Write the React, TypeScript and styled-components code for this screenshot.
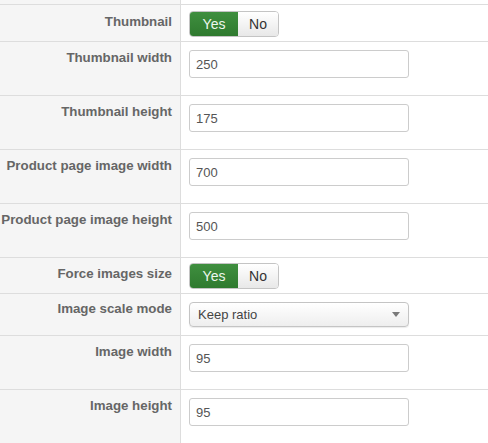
import React from 'react';
import styled, { createGlobalStyle } from 'styled-components';

const GlobalStyle = createGlobalStyle`
    body {
        margin: 0;
        background: #ffffff;
        font-family: "Liberation Sans", Arial, sans-serif;
    }
`

type Field =
    | { kind: 'toggle'; label: string; value: boolean; height: number; pad: number; labelPad: number }
    | { kind: 'text'; label: string; value: string; height: number; pad: number; labelPad: number }
    | { kind: 'select'; label: string; value: string; height: number; pad: number; labelPad: number }

const FIELDS: Field[] = [
    { kind: 'toggle', label: 'Thumbnail', value: true, height: 36, pad: 6, labelPad: 8 },
    { kind: 'text', label: 'Thumbnail width', value: '250', height: 53, pad: 8, labelPad: 7 },
    { kind: 'text', label: 'Thumbnail height', value: '175', height: 53, pad: 8, labelPad: 7 },
    { kind: 'text', label: 'Product page image width', value: '700', height: 53, pad: 8, labelPad: 7 },
    { kind: 'text', label: 'Product page image height', value: '500', height: 53, pad: 8, labelPad: 7 },
    { kind: 'toggle', label: 'Force images size', value: true, height: 35, pad: 5, labelPad: 7 },
    { kind: 'select', label: 'Image scale mode', value: 'Keep ratio', height: 41, pad: 8, labelPad: 6 },
    { kind: 'text', label: 'Image width', value: '95', height: 53, pad: 8, labelPad: 7 },
    { kind: 'text', label: 'Image height', value: '95', height: 54, pad: 8, labelPad: 7 },
]

export default function App() {
    return (
        <>
            <GlobalStyle />
            <Table>
                <Row $height={4}>
                    <LabelCell $pad={0} />
                    <FieldCell $pad={0} />
                </Row>
                {FIELDS.map((f) => (
                    <Row key={f.label} $height={f.height}>
                        <LabelCell $pad={f.labelPad}>{f.label}</LabelCell>
                        <FieldCell $pad={f.pad}>
                            {f.kind === 'toggle' && (
                                <Toggle>
                                    <ToggleButton $active={f.value} $width={48}>Yes</ToggleButton>
                                    <ToggleButton $active={!f.value} $width={40}>No</ToggleButton>
                                </Toggle>
                            )}
                            {f.kind === 'text' && <TextInput defaultValue={f.value} />}
                            {f.kind === 'select' && (
                                <Select>
                                    {f.value}
                                    <Caret viewBox="0 0 8 5" width={8} height={5}>
                                        <path d="M0 0 L8 0 L4 5 Z" fill="#7a7a7a" />
                                    </Caret>
                                </Select>
                            )}
                        </FieldCell>
                    </Row>
                ))}
            </Table>
        </>
    )
}

const Table = styled.div`
    width: 488px;
    height: 443px;
    overflow: hidden;
    display: flex;
    flex-direction: column;
`

const Row = styled.div<{ $height: number }>`
    display: flex;
    flex: none;
    height: ${(p) => p.$height}px;
    border-bottom: 1px solid #dddddd;
    &:last-child {
        border-bottom: none;
    }
`

const LabelCell = styled.div<{ $pad: number }>`
    width: 181px;
    flex: none;
    box-sizing: border-box;
    padding: ${(p) => p.$pad}px 8px 0 0;
    background: #f5f5f5;
    border-right: 1px solid #dddddd;
    text-align: right;
    font: bold 13.3px/18px "Liberation Sans", Arial, sans-serif;
    color: #666666;
    white-space: nowrap;
`

const FieldCell = styled.div<{ $pad: number }>`
    flex: 1;
    padding: ${(p) => p.$pad}px 0 0 8px;
`

const Toggle = styled.div`
    display: inline-flex;
    height: 26px;
    border-radius: 4px;
    overflow: hidden;
    border: 1px solid #c4c4c4;
    box-sizing: border-box;
`

const ToggleButton = styled.div<{ $active: boolean; $width: number }>`
    width: ${(p) => p.$width}px;
    display: flex;
    align-items: center;
    justify-content: center;
    font: 14px "Liberation Sans", Arial, sans-serif;
    color: ${(p) => (p.$active ? '#eef7ee' : '#333333')};
    background: ${(p) =>
        p.$active ? 'linear-gradient(#3f8f3f, #2f7a2f)' : 'linear-gradient(#ffffff, #e8e8e8)'};
`

const TextInput = styled.input`
    display: block;
    width: 220px;
    height: 28px;
    box-sizing: border-box;
    border: 1px solid #cccccc;
    border-radius: 3px;
    padding: 0 6px;
    font: 13px "Liberation Sans", Arial, sans-serif;
    color: #555555;
    outline: none;
`

const Select = styled.div`
    position: relative;
    width: 220px;
    height: 25px;
    box-sizing: border-box;
    border: 1px solid #c4c4c4;
    border-radius: 4px;
    padding-left: 8px;
    display: flex;
    align-items: center;
    background: linear-gradient(#ffffff, #eeeeee);
    box-shadow: 0 1px 1px rgba(0, 0, 0, 0.08);
    font: 13px "Liberation Sans", Arial, sans-serif;
    color: #444444;
`

const Caret = styled.svg`
    position: absolute;
    right: 8px;
    top: 9px;
`
